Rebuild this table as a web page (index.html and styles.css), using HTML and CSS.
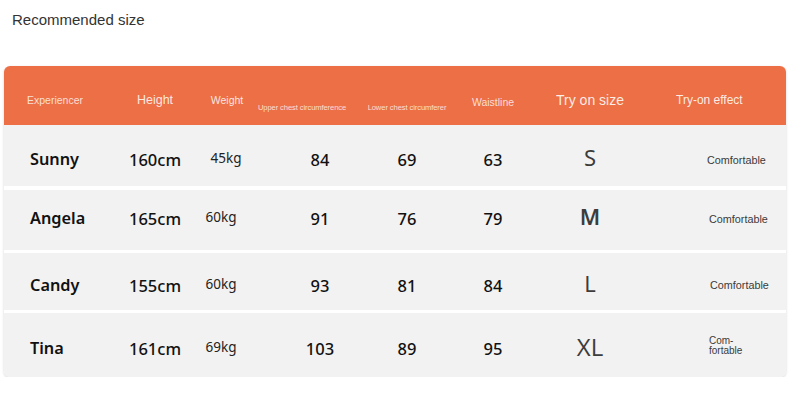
FILE: index.html
```html
<!DOCTYPE html>
<html>
<head>
<meta charset="utf-8">
<link rel="stylesheet" href="styles.css">
</head>
<body>
<div class="title">Recommended size</div>
<div class="card">
  <div class="row head">
    <div class="c name"><span class="h-exp">Experiencer</span></div>
    <div class="c"><span class="h-height">Height</span></div>
    <div class="c"><span class="h-weight">Weight</span></div>
    <div class="c upper"><span class="h-chest">Upper chest circumference</span></div>
    <div class="c lower"><span class="h-chest">Lower chest circumferer</span></div>
    <div class="c"><span class="h-waist">Waistline</span></div>
    <div class="c"><span class="h-size">Try on size</span></div>
    <div class="c effect"><span class="h-effect">Try-on effect</span></div>
  </div>

  <div class="row r1">
    <div class="c name"><span class="nm">Sunny</span></div>
    <div class="c"><span class="num">160cm</span></div>
    <div class="c"><span class="kg kg1">45kg</span></div>
    <div class="c upper-d"><span class="num">84</span></div>
    <div class="c"><span class="num">69</span></div>
    <div class="c"><span class="num">63</span></div>
    <div class="c"><span class="sz">S</span></div>
    <div class="c effect-d"><span class="cf cf1">Comfortable</span></div>
  </div>

  <div class="row r2">
    <div class="c name"><span class="nm">Angela</span></div>
    <div class="c"><span class="num">165cm</span></div>
    <div class="c"><span class="kg kg2">60kg</span></div>
    <div class="c upper-d"><span class="num">91</span></div>
    <div class="c"><span class="num">76</span></div>
    <div class="c"><span class="num">79</span></div>
    <div class="c"><span class="sz sz-m">M</span></div>
    <div class="c effect-d"><span class="cf cf2">Comfortable</span></div>
  </div>

  <div class="row r3">
    <div class="c name"><span class="nm">Candy</span></div>
    <div class="c"><span class="num">155cm</span></div>
    <div class="c"><span class="kg kg2">60kg</span></div>
    <div class="c upper-d"><span class="num">93</span></div>
    <div class="c"><span class="num">81</span></div>
    <div class="c"><span class="num">84</span></div>
    <div class="c"><span class="sz">L</span></div>
    <div class="c effect-d"><span class="cf cf3">Comfortable</span></div>
  </div>

  <div class="row r4">
    <div class="c name"><span class="nm">Tina</span></div>
    <div class="c"><span class="num">161cm</span></div>
    <div class="c"><span class="kg kg2">69kg</span></div>
    <div class="c upper-d"><span class="num">103</span></div>
    <div class="c"><span class="num">89</span></div>
    <div class="c"><span class="num">95</span></div>
    <div class="c"><span class="sz sz-xl">XL</span></div>
    <div class="c effect-d"><span class="cf cf4">Com-<br>fortable</span></div>
  </div>
</div>
</body>
</html>
```

FILE: styles.css
```css
* { box-sizing: border-box; }

body {
  margin: 0;
  background: #ffffff;
  font-family: "Liberation Sans", Arial, sans-serif;
  color: #333;
}

.title {
  font-size: 15px;
  line-height: 18px;
  color: #333;
  padding: 11px 0 0 12px;
  height: 66px;
}

.card {
  margin-left: 4px;
  width: 782px;
  border-radius: 6px;
  overflow: hidden;
  background: #fff;
  box-shadow: 0 1px 3px rgba(0, 0, 0, 0.16);
}

.row {
  display: grid;
  grid-template-columns: 114px 74px 70px 102px 86px 86px 108px 1fr;
  background: #f2f2f2;
}

.c {
  display: flex;
  align-items: center;
  justify-content: center;
  white-space: nowrap;
}

.head {
  background: #ec6f45;
  height: 59px;
  padding-top: 9px;
  color: rgba(255, 255, 255, 0.78);
}

.head .name { justify-content: flex-start; padding-left: 23px; }
.h-exp { font-size: 10.5px; }
.h-height { font-size: 12.5px; color: rgba(255, 255, 255, 0.85); }
.h-weight { font-size: 10.5px; color: rgba(255, 255, 255, 0.85); }
.h-chest { font-size: 7.6px; letter-spacing: -0.1px; padding-top: 14px; }
.upper { padding-right: 22px; }
.h-waist { font-size: 10.5px; padding-top: 3px; }
.h-size { font-size: 14px; color: rgba(255, 255, 255, 0.88); }
.h-effect { font-size: 12px; color: rgba(255, 255, 255, 0.88); }
.head .effect { justify-content: flex-start; padding-left: 32px; }

.r1 { height: 61px; padding-top: 7px; }
.r2 { height: 60px; margin-top: 4px; padding-bottom: 4px; }
.r3 { height: 57px; margin-top: 3px; padding-top: 7px; }
.r4 { height: 64px; margin-top: 3px; padding-top: 6px; }

.row:not(.head) .name { justify-content: flex-start; padding-left: 26px; }

.nm {
  font-family: "Noto Sans", sans-serif;
  font-weight: 600;
  font-size: 16.3px;
  color: #111;
}

.num {
  font-family: "Noto Sans", sans-serif;
  font-weight: 500;
  font-size: 16.5px;
  color: #111;
}

.upper-d { padding-left: 14px; }

.kg {
  font-family: "Noto Sans", sans-serif;
  font-size: 13.5px;
  color: #222;
  margin-top: -3px;
}
.kg1 { margin-left: -2px; }
.kg2 { margin-left: -12px; }

.sz {
  font-family: "Noto Sans", sans-serif;
  font-size: 22px;
  color: #3c3c3c;
  margin-top: -4px;
}
.sz-m { font-weight: 600; }
.sz-xl { font-family: "Open Sans", "Noto Sans", sans-serif; font-weight: 400; font-size: 24px; }

.effect-d { justify-content: flex-start; }
.cf {
  font-family: "Liberation Sans", Arial, sans-serif;
  font-size: 10.8px;
  color: #3a3a3a;
}
.cf1 { padding-left: 63px; margin-top: 2px; }
.cf2 { padding-left: 65px; margin-top: 2px; }
.cf3 { padding-left: 66px; }
.cf4 { padding-left: 65px; line-height: 10px; font-size: 10px; margin-top: -4px; }
```
